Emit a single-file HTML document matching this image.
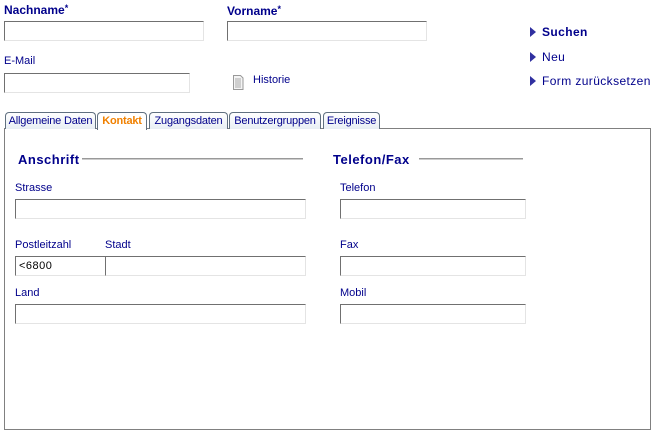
<!DOCTYPE html>
<html><head><meta charset="utf-8"><style>
*{margin:0;padding:0;box-sizing:border-box}
body{width:654px;height:434px;background:#fff;position:relative;font-family:"Liberation Sans",Arial,sans-serif;color:#00008b;overflow:hidden}
.a{position:absolute;white-space:nowrap}
.l{font-size:11px}
.b{font-weight:bold;font-size:12px}
.in{position:absolute;height:20px;border-top:1px solid #707070;border-left:1px solid #707070;border-right:1px solid #e4e4e4;border-bottom:1px solid #e4e4e4;background:#fff;font-size:11px;color:#000;padding:3px 3px;letter-spacing:0.5px}
.h{font-weight:bold;font-size:13px;letter-spacing:0.5px}
.ln{position:absolute;height:2px;border-top:1px solid #999;border-bottom:1px solid #ccc}
.tab{position:absolute;top:112px;height:17px;border:1px solid #607080;border-bottom:none;border-radius:4px 4px 0 0;background:linear-gradient(#fff,#e8eef4);font-size:11px;padding:2px 0 0 0;text-align:center;white-space:nowrap;overflow:hidden;letter-spacing:-0.2px}
.m{position:absolute;left:530px;font-size:12px;letter-spacing:0.4px;white-space:nowrap}
.tri{display:inline-block;width:0;height:0;border-top:5px solid transparent;border-bottom:5px solid transparent;border-left:6px solid #3030a0;margin-right:6px;position:relative;top:1px}
</style></head><body>
<div class="a b" style="left:4px;top:3px">Nachname<span style="font-size:9px;vertical-align:top">*</span></div>
<div class="in" style="left:4px;top:21px;width:200px"></div>
<div class="a b" style="left:227px;top:4px">Vorname<span style="font-size:9px;vertical-align:top">*</span></div>
<div class="in" style="left:227px;top:21px;width:200px"></div>
<div class="a l" style="left:4px;top:55px">E-Mail</div>
<div class="in" style="left:4px;top:73px;width:186px"></div>
<svg class="a" style="left:232px;top:75px" width="12" height="15"><path d="M1.5 .5h7l2.5 2.5v11.5h-9.5z" fill="#f4f4f4" stroke="#999"/><path d="M3 4h6M3 6h6M3 8h6M3 10h6M3 12h6" stroke="#aaa"/></svg>
<div class="a l" style="left:253px;top:74px">Historie</div>
<div class="m b" style="top:25px"><span class="tri"></span>Suchen</div>
<div class="m" style="top:50px"><span class="tri"></span>Neu</div>
<div class="m" style="top:74px"><span class="tri"></span>Form zurücksetzen</div>

<div class="a" style="left:4px;top:128px;width:647px;height:302px;border:1px solid #808080"></div>
<div class="tab" style="left:5px;width:91px">Allgemeine Daten</div>
<div class="tab" style="left:97px;width:50px;color:#f08000;font-weight:bold;background:#fff;height:18px">Kontakt</div>
<div class="tab" style="left:149px;width:79px">Zugangsdaten</div>
<div class="tab" style="left:229px;width:92px">Benutzergruppen</div>
<div class="tab" style="left:323px;width:57px">Ereignisse</div>

<div class="a h" style="left:18px;top:152px">Anschrift</div>
<div class="ln" style="left:82px;top:158px;width:221px"></div>
<div class="a l" style="left:15px;top:182px">Strasse</div>
<div class="in" style="left:15px;top:199px;width:291px"></div>
<div class="a l" style="left:15px;top:239px">Postleitzahl</div>
<div class="a l" style="left:105px;top:239px">Stadt</div>
<div class="in" style="left:15px;top:256px;width:91px">&lt;6800</div>
<div class="in" style="left:105px;top:256px;width:201px"></div>
<div class="a l" style="left:15px;top:287px">Land</div>
<div class="in" style="left:15px;top:304px;width:291px"></div>

<div class="a h" style="left:333px;top:152px">Telefon/Fax</div>
<div class="ln" style="left:419px;top:158px;width:104px"></div>
<div class="a l" style="left:340px;top:182px">Telefon</div>
<div class="in" style="left:340px;top:199px;width:186px"></div>
<div class="a l" style="left:340px;top:239px">Fax</div>
<div class="in" style="left:340px;top:256px;width:186px"></div>
<div class="a l" style="left:340px;top:287px">Mobil</div>
<div class="in" style="left:340px;top:304px;width:186px"></div>
</body></html>
